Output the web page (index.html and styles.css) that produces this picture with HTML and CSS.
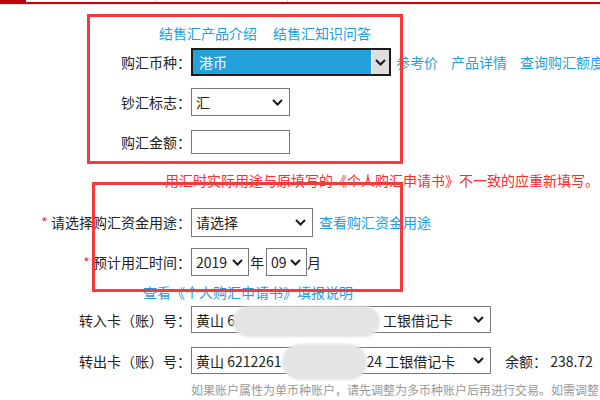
FILE: index.html
```html
<!DOCTYPE html>
<html lang="zh-CN">
<head>
<meta charset="utf-8">
<title>购汇</title>
<link rel="stylesheet" href="styles.css">
</head>
<body>
<div class="top">
  <div class="seg seg-logo"></div>
  <div class="seg seg-a"></div>
  <div class="seg seg-b"></div>
  <div class="seg seg-c"></div>
</div>
<div class="redline"></div>
<div class="grayline"></div>

<div class="form">
  <div class="links">
    <a class="link">结售汇产品介绍</a>
    <a class="link">结售汇知识问答</a>
  </div>

  <div class="row r1">
    <div class="lbl">购汇币种：</div>
    <div class="sel sel-focus w200">
      <span class="hl">港币</span>
      <span class="btn"><svg width="11" height="7" viewBox="0 0 11 7"><path d="M1 1 L5.5 5.5 L10 1" fill="none" stroke="#1a1a1a" stroke-width="2"/></svg></span>
    </div>
    <div class="after-links">
      <a class="link">参考价</a>
      <a class="link">产品详情</a>
      <a class="link">查询购汇额度</a>
    </div>
  </div>

  <div class="row r2">
    <div class="lbl">钞汇标志：</div>
    <div class="sel w100">
      <span class="val">汇</span>
      <svg class="chev" width="11" height="7" viewBox="0 0 11 7"><path d="M1 1 L5.5 5.5 L10 1" fill="none" stroke="#1a1a1a" stroke-width="2"/></svg>
    </div>
  </div>

  <div class="row r3">
    <div class="lbl">购汇金额：</div>
    <input class="amount" type="text">
  </div>

  <div class="note-red">用汇时实际用途与原填写的《个人购汇申请书》不一致的应重新填写。</div>

  <div class="row r4">
    <div class="lbl"><span class="star">*</span> 请选择购汇资金用途：</div>
    <div class="sel w122">
      <span class="val">请选择</span>
      <svg class="chev" width="11" height="7" viewBox="0 0 11 7"><path d="M1 1 L5.5 5.5 L10 1" fill="none" stroke="#1a1a1a" stroke-width="2"/></svg>
    </div>
    <a class="link link-after">查看购汇资金用途</a>
  </div>

  <div class="row r5">
    <div class="lbl"><span class="star">*</span> 预计用汇时间：</div>
    <div class="sel w58">
      <span class="val">2019</span>
      <svg class="chev tight" width="11" height="7" viewBox="0 0 11 7"><path d="M1 1 L5.5 5.5 L10 1" fill="none" stroke="#1a1a1a" stroke-width="2"/></svg>
    </div>
    <span class="unit">年</span>
    <div class="sel w41">
      <span class="val">09</span>
      <svg class="chev tight" width="11" height="7" viewBox="0 0 11 7"><path d="M1 1 L5.5 5.5 L10 1" fill="none" stroke="#1a1a1a" stroke-width="2"/></svg>
    </div>
    <span class="unit">月</span>
  </div>

  <div class="link-row">
    <a class="link">查看《个人购汇申请书》填报说明</a>
  </div>

  <div class="row r6">
    <div class="lbl">转入卡（账）号：</div>
    <div class="sel w300">
      <span class="val">黄山 6<span class="mask m145"></span> 工银借记卡</span>
      <svg class="chev" width="11" height="7" viewBox="0 0 11 7"><path d="M1 1 L5.5 5.5 L10 1" fill="none" stroke="#1a1a1a" stroke-width="2"/></svg>
    </div>
  </div>

  <div class="row r7">
    <div class="lbl">转出卡（账）号：</div>
    <div class="sel w300">
      <span class="val">黄山 6212261<span class="mask m85"></span>24 工银借记卡</span>
      <svg class="chev" width="11" height="7" viewBox="0 0 11 7"><path d="M1 1 L5.5 5.5 L10 1" fill="none" stroke="#1a1a1a" stroke-width="2"/></svg>
    </div>
    <span class="balance">余额： 238.72</span>
  </div>

  <div class="note-gray">如果账户属性为单币种账户，请先调整为多币种账户后再进行交易。如需调整</div>
</div>

<div class="mark mark-1"></div>
<div class="mark mark-2"></div>
</body>
</html>
```

FILE: styles.css
```css
html, body {
  margin: 0;
  padding: 0;
  background: #fff;
  overflow: hidden;
}
body {
  width: 600px;
  height: 400px;
  position: relative;
  font-family: "Noto Sans CJK SC", "Noto Sans", sans-serif;
  font-size: 14px;
  line-height: 20px;
  color: #222;
}

/* top header strip */
.top {
  display: flex;
  height: 2px;
}
.seg { height: 2px; }
.seg-logo { width: 26px; background: #b8000a; }
.seg-a { width: 130px; border-right: 1px solid #d8d8d8; }
.seg-b { width: 130px; border-right: 1px solid #d8d8d8; }
.seg-c { flex: 1; }
.redline { height: 2px; background: #c4000b; }
.grayline { height: 1px; background: #e6e6e6; }

.form {
  display: flex;
  flex-direction: column;
}

.link {
  color: #1e9ee0;
  text-decoration: none;
  white-space: nowrap;
}

.links {
  display: flex;
  gap: 16px;
  height: 20px;
  margin-top: 18px;
  padding-left: 159px;
}

.row {
  display: flex;
  align-items: center;
  white-space: nowrap;
}
.lbl {
  width: 191px;
  flex: none;
  text-align: right;
  color: #222;
}
.star {
  color: #f0353b;
}

.sel {
  box-sizing: border-box;
  height: 28px;
  border: 1px solid #777;
  background: #fff;
  display: flex;
  align-items: center;
  padding-left: 4px;
  padding-right: 6px;
  flex: none;
}
.sel .val {
  flex: 1;
  white-space: nowrap;
}
.sel .chev { flex: none; }
.sel .chev.tight { margin-right: -1px; }

.w200 { width: 200px; }
.w100 { width: 99px; }
.w122 { width: 122px; }
.w58 { width: 58px; }
.w41 { width: 41px; }
.w300 { width: 300px; }

.sel-focus {
  border: 2px solid #1c1c1c;
  padding: 0;
  align-items: stretch;
}
.sel-focus .hl {
  flex: 1;
  background: #24a0da;
  color: #fff;
  padding-left: 6px;
  display: flex;
  align-items: center;
  margin: 0;
}
.sel-focus .btn {
  width: 17px;
  background: #dedede;
  border-left: 1px solid #fff;
  display: flex;
  align-items: center;
  justify-content: center;
}

.after-links {
  display: flex;
  gap: 13px;
  margin-left: 5px;
}

.r1 { height: 28px; margin-top: 5px; }
.r2 { height: 28px; margin-top: 12px; }
.r3 { height: 24px; margin-top: 14px; }

.amount {
  box-sizing: border-box;
  width: 99px;
  height: 24px;
  border: 1px solid #777;
  margin: 0;
  padding: 0 4px;
  font: inherit;
  background: #fff;
}

.note-red {
  height: 20px;
  margin-top: 16px;
  padding-left: 165px;
  color: #ff2a2a;
  white-space: nowrap;
}

.r4 { height: 28px; margin-top: 18px; }
.r4 .sel { height: 29px; }
.link-after { margin-left: 6px; }

.r5 { height: 28px; margin-top: 12px; }
.unit { margin: 0 2px 0 1px; }
.r5 .unit:last-child { margin-left: 0; }
.r5 .sel + .unit + .sel { margin-left: 0; }

.link-row {
  height: 20px;
  margin-top: 6px;
  padding-left: 143px;
}

.r6 { height: 27px; margin-top: 4px; }
.r7 { height: 27px; margin-top: 14px; }
.r6 .sel, .r7 .sel { height: 27px; }

.mask {
  display: inline-block;
  position: relative;
  height: 1px;
  vertical-align: middle;
}
.mask::before {
  content: "";
  position: absolute;
  left: 0;
  right: 0;
  background: #e4e4e4;
  filter: blur(1px);
}
.m145 { width: 145px; }
.m145::before { top: -15px; height: 31px; border-radius: 16px; left: -2px; }
.m85 { width: 85px; }
.m85::before { top: -18px; height: 36px; border-radius: 20px; }

.balance {
  margin-left: 14px;
  color: #222;
}

.note-gray {
  height: 18px;
  line-height: 18px;
  margin-top: 7px;
  padding-left: 191px;
  font-size: 12px;
  color: #999;
  white-space: nowrap;
}

/* red annotation rectangles drawn over the page */
.mark {
  position: absolute;
  border: 3px solid #f63a3c;
  box-sizing: border-box;
  pointer-events: none;
}
.mark-1 { left: 87px; top: 14px; width: 316px; height: 150px; }
.mark-2 { left: 92px; top: 182px; width: 311px; height: 110px; }
```
